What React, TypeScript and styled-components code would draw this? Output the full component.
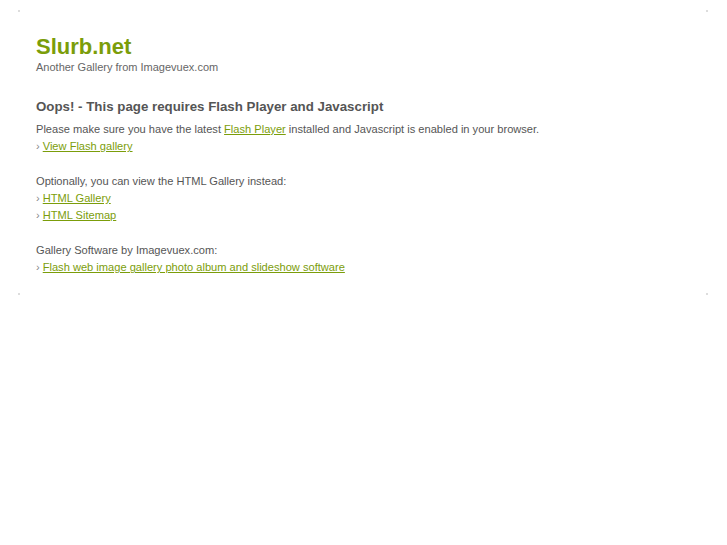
import React from 'react';
import styled, { createGlobalStyle } from 'styled-components';

const GlobalStyle = createGlobalStyle`
  body {
    margin: 0;
    background: #fff;
    font-family: 'Liberation Sans', Arial, sans-serif;
  }
`;

const Page = styled.div`
  padding: 10px 18px;
`;

const Box = styled.div`
  width: 691px;
  height: 286px;
  box-sizing: border-box;
  padding: 24px 18px 0;
  background:
    radial-gradient(circle at 1px 1px, #ddd 0.8px, transparent 1.2px) top left / 3px 3px no-repeat,
    radial-gradient(circle at 1px 1px, #ddd 0.8px, transparent 1.2px) top right / 3px 3px no-repeat,
    radial-gradient(circle at 1px 1px, #ddd 0.8px, transparent 1.2px) bottom left / 3px 3px no-repeat,
    radial-gradient(circle at 1px 1px, #ddd 0.8px, transparent 1.2px) bottom right / 3px 3px no-repeat;
`;

const SiteTitle = styled.h1`
  margin: 0;
  font-size: 22px;
  line-height: 26px;
  font-weight: bold;
  color: #7b9d0a;
`;

const Tagline = styled.div`
  font-size: 11px;
  line-height: 14px;
  color: #666;
`;

const Heading = styled.h2`
  margin: 24px 0 5px;
  font-size: 13.3px;
  line-height: 18px;
  font-weight: bold;
  color: #555;
`;

const Text = styled.div`
  font-size: 11.1px;
  line-height: 17.3px;
  color: #555;
`;

const Gap = styled.div`
  height: 17.3px;
`;

const Link = styled.a`
  color: #7b9d0a;
  text-decoration: underline;
`;

const Arrow = styled.span`
  color: #888;
  margin-right: 3px;
`;

const Bullet = ({ children }: { children: React.ReactNode }) => (
  <Text>
    <Arrow>›</Arrow>
    <Link href="#">{children}</Link>
  </Text>
);

export default function App() {
  return (
    <>
      <GlobalStyle />
      <Page>
        <Box>
          <SiteTitle>Slurb.net</SiteTitle>
          <Tagline>Another Gallery from Imagevuex.com</Tagline>
          <Heading>Oops! - This page requires Flash Player and Javascript</Heading>
          <Text>
            Please make sure you have the latest <Link href="#">Flash Player</Link> installed and
            Javascript is enabled in your browser.
          </Text>
          <Bullet>View Flash gallery</Bullet>
          <Gap />
          <Text>Optionally, you can view the HTML Gallery instead:</Text>
          <Bullet>HTML Gallery</Bullet>
          <Bullet>HTML Sitemap</Bullet>
          <Gap />
          <Text>Gallery Software by Imagevuex.com:</Text>
          <Bullet>Flash web image gallery photo album and slideshow software</Bullet>
        </Box>
      </Page>
    </>
  );
}
